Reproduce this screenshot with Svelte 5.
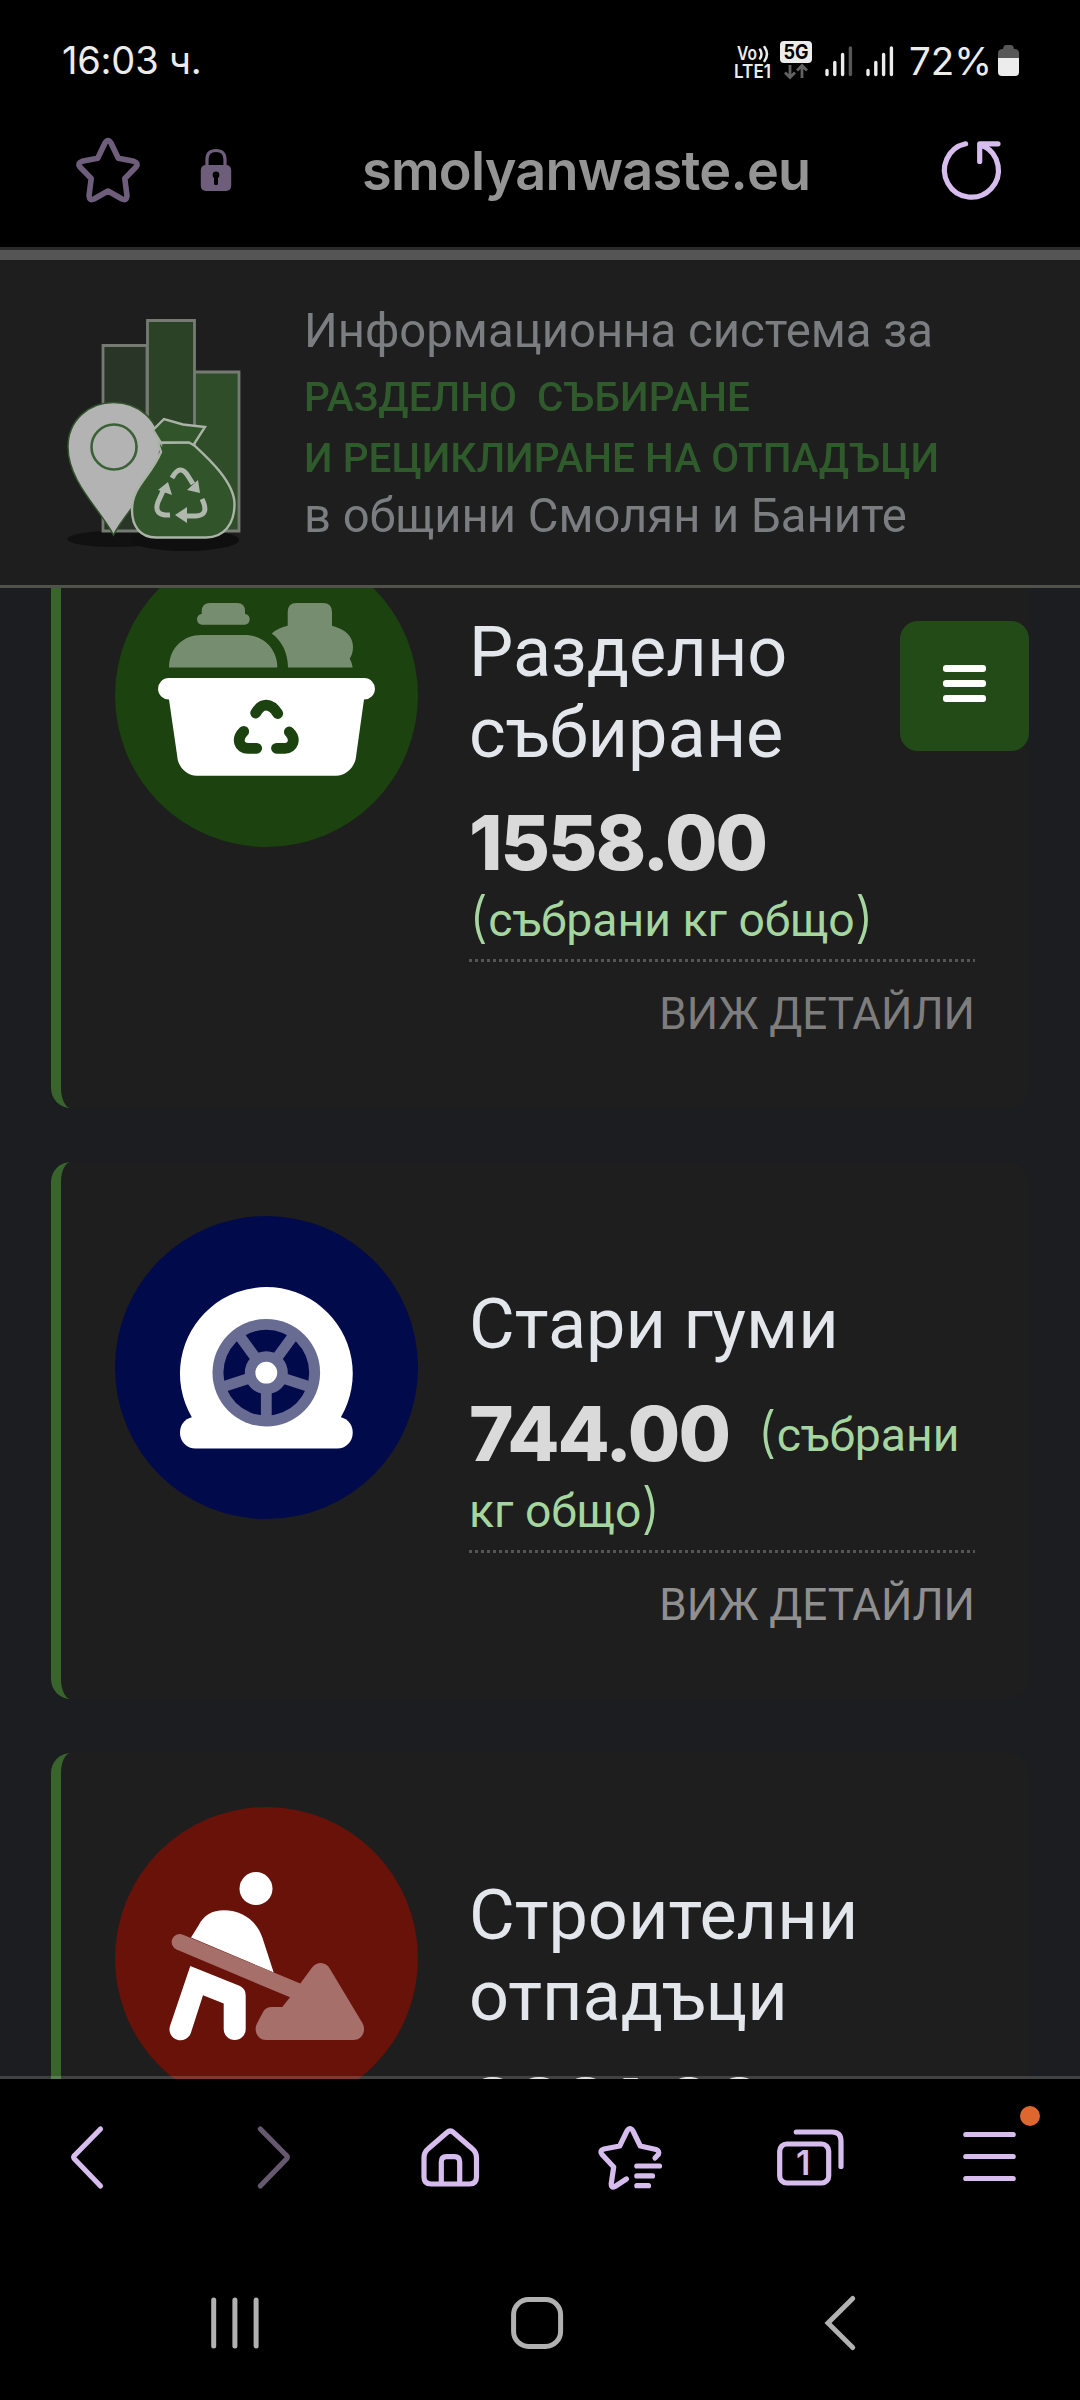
<script lang="ts">
	type Card = {
		title: string[];
		amount: string;
		icon: 'basket' | 'tire' | 'digging';
		color: string;
		visited?: boolean;
	};

	const cards: Card[] = [
		{ title: ['Разделно', 'събиране'], amount: '1558.00', icon: 'basket', color: '#1b420f', visited: true },
		{ title: ['Стари гуми'], amount: '744.00', icon: 'tire', color: '#010a4b' },
		{ title: ['Строителни', 'отпадъци'], amount: '2221.00', icon: 'digging', color: '#68120a' }
	];

	const spokes = [0, 72, 144, 216, 288];
</script>

<div class="screen">
	<div class="status-bar">
		<span class="time">16:03 ч.</span>
		<div class="status-icons">
			<svg class="volte" width="38" height="38" viewBox="0 -2 38 38">
				<text x="3" y="14.500" textLength="20" lengthAdjust="spacingAndGlyphs">Vo</text>
				<path d="M26 4.500Q29 9 26 13.500M30.500 2Q35.500 9 30.500 16" />
				<text x="0" y="32.500" textLength="37" lengthAdjust="spacingAndGlyphs">LTE1</text>
			</svg>
			<svg class="five-g" width="32" height="40" viewBox="0 0 32 40">
				<rect width="32" height="22" rx="4" fill="#ececec" />
				<text x="3.500" y="18" textLength="25" lengthAdjust="spacingAndGlyphs">5G</text>
				<path d="M10 24V36M5 31.500L10 36.500L15 31.500M22 37V25M17 29.500L22 24.500L27 29.500" />
			</svg>
			<svg class="signal" width="28" height="32" viewBox="0 0 28 32">
				<path d="M2 25.500V29.500M9.800 17.500V29.500M17.600 9.500V29.500" />
				<path class="dim" d="M25.400 3V29.500" />
			</svg>
			<svg class="signal" width="28" height="32" viewBox="0 0 28 32">
				<path d="M2 25.500V29.500M9.800 17.500V29.500M17.600 9.500V29.500M25.400 3V29.500" />
			</svg>
			<span class="battery-level">72%</span>
			<svg class="battery" width="21" height="31" viewBox="0 0 21 31">
				<path d="M0 13V8Q0 4 5 4Q5.500 0 8 0H13Q15.500 0 16 4Q21 4 21 8V13Z" fill="#575757" />
				<path d="M0 13H21V27Q21 31 17 31H4Q0 31 0 27Z" fill="#ececec" />
			</svg>
		</div>
	</div>

	<div class="url-bar">
		<svg class="muted-icon" width="80" height="80" viewBox="0 0 80 80">
			<path d="M37 13Q40 8 43 13L50.300 28.300L66 31.300Q71 33 68 37L56.800 48.500L59 66Q58.500 71 54 69L40 61L26 69Q21.500 71 21 66L23.200 48.500L12 37Q9 33 14 31.300L29.700 28.300Z" />
		</svg>
		<svg class="lock" width="32" height="44" viewBox="0 0 32 44">
			<path d="M7 19V11.500Q7 2.500 16 2.500Q25 2.500 25 11.500V19" fill="none" stroke="#6e5e7c" stroke-width="3.200" />
			<rect x="0.800" y="17" width="30.400" height="26" rx="5" fill="#6e5e7c" />
			<circle cx="16" cy="27" r="3.400" />
			<rect x="14" y="28" width="4" height="9" rx="1.500" />
		</svg>
		<span class="url">smolyanwaste.eu</span>
		<svg class="icon reload" width="80" height="80" viewBox="0 0 80 80">
			<path d="M33.600 13.800A27 27 0 1 0 51.500 16M66 13.800H47.700V31.500M48.500 14.500L53 17" />
		</svg>
	</div>

	<header class="banner">
		<svg width="1080" height="325" viewBox="0 260 1080 325">
			<ellipse cx="115" cy="539" rx="48" ry="8" fill="#111" />
			<ellipse cx="185" cy="540" rx="54" ry="11" fill="#0f0f0f" />
			<g stroke="#757b73" stroke-width="2.800">
				<path d="M103 345.500H147V531H103Z" fill="#283527" />
				<path d="M194 372H239V531H194Z" fill="#304d2a" />
				<path d="M147.500 320.500H194.500V531H147.500Z" fill="#2c4227" />
			</g>
			<path d="M113.500 535C101 510 68 482 68 447C68 420 89 402.500 113.500 402.500C138 402.500 160 420 160 447C160 482 126 510 113.500 535Z" fill="#b3b3b3" stroke="#31542b" stroke-width="1.500" />
			<circle cx="114" cy="447" r="22.500" fill="none" stroke="#3a6236" stroke-width="2.600" />
			<g fill="#31542b" stroke="#a9b3a6" stroke-width="2.400">
				<path d="M158 443L161 452C150 478 132 486 132 510C132 526 140 537.500 156 537.500H206C224 537.500 234.500 524 234.500 504C234.500 482 208 458 194 445L189 442Z" />
				<path d="M161 443L153 430L164 419L183 424.500L205 427L193.500 445L189 442.500H161Z" />
			</g>
			<g class="arrows">
				<path d="M172 478Q180 463 188 476L193 484M202 499Q210 515 196 516H184M170 515Q153 516 158 502L163 491" />
				<path class="heads" d="M198 480L200 493L187 490ZM175 515L187 507V523ZM168 482L172 495L158 490Z" />
			</g>
			<g class="plain">
				<text x="304" y="347" font-size="47.300">Информационна система за</text>
				<text x="304" y="532" font-size="47.200">в общини Смолян и Баните</text>
			</g>
			<g class="green">
				<text x="304" y="411" textLength="446">РАЗДЕЛНО&nbsp; СЪБИРАНЕ</text>
				<text x="304" y="471.500" textLength="635">И РЕЦИКЛИРАНЕ НА ОТПАДЪЦИ</text>
			</g>
		</svg>
	</header>

	<main>
		<button class="menu-button" aria-label="Меню">
			<span></span>
			<span></span>
			<span></span>
		</button>

		<div class="cards">
			{#each cards as card (card.icon)}
				<article class="card" class:tall={card.title.length > 1}>
					<svg class="card-icon" width="303" height="303" viewBox="0 0 303 303">
						<circle cx="151.500" cy="151.500" r="151.500" fill={card.color} />
						{#if card.icon === 'basket'}
							<g class="secondary">
								<path d="M86.700 70V67Q87 58.900 95 58.900H122Q130 58.900 130 67V70A5.400 5.400 0 0 1 130 80.700H86.700A5.400 5.400 0 0 1 86.700 70Z" />
								<path d="M54 123.500C54 104 68 91 86.700 91H129.700C148.500 91 162.300 105 162.300 123.500Z" />
								<path d="M172.700 81.700V68Q172.700 58.900 181.500 58.900H208Q217 58.900 217 68V81.700C230 85 238 92 238 103C238 108 236.500 112 234.700 114.600Q237 119 237.700 123.500H173C173 109 166.500 96.500 156.700 89.600Q163 83.500 172.700 81.700Z" />
							</g>
							<path class="primary" d="M53.800 133.900H249.200A10.850 10.850 0 0 1 249 155.600L241 212.800C240 223 231 231.700 221 231.700H81.700C72 231.700 63 223 62.300 212.800L54 155.600A10.850 10.850 0 0 1 53.800 133.900Z" />
							<path
								d="M140.700 169C147 158.500 155.500 158.500 162.700 169.500M128.700 187.400C121 195 124 204.300 133 204.300H141.700M174.300 188C181.500 195 178 204.300 170 204.300H161.500"
								fill="none"
								stroke={card.color}
								stroke-width="10.800"
								stroke-linecap="round"
							/>
						{:else if card.icon === 'tire'}
							<g class="primary">
								<path d="M76.700 201A86.400 86.400 0 1 1 226 201L222 210H81Z" />
								<rect x="65" y="200.700" width="172.700" height="31.800" rx="15.500" />
							</g>
							<circle cx="151.300" cy="156.700" r="53.800" fill="#686c93" />
							<circle cx="151.300" cy="156.700" r="42.900" fill={card.color} />
							<g fill="#686c93">
								{#each spokes as angle}
									<rect x="145.900" y="170" width="10.800" height="31" transform="rotate({angle} 151.300 156.700)" />
								{/each}
								<circle cx="151.300" cy="156.700" r="21.500" />
							</g>
							<circle class="primary" cx="151.300" cy="156.700" r="10.900" />
						{:else}
							<g class="primary">
								<circle cx="141" cy="81.600" r="16.500" />
								<path d="M76 130.600L83.500 118.500C89 108 97 103.300 109 103.300C127 103.300 142 114 147.500 131L158.700 165.600Z" />
								<path d="M75.300 159L125 179Q130.700 182 130.700 188.300V222A11 11 0 0 1 108.700 222V196.600L88 188.300L76 225.600A10.900 10.900 0 0 1 55 219Z" />
							</g>
							<path class="secondary" d="M68 127.700L185.300 176.600L196.700 161C202 154 211 154.500 215 162L247.700 216.600C251.500 224 247 233 238.300 233H151C143 233 138 224 142 216.500L148.300 204.600Q151 200 156.500 200H167.300L175 190.300L61.500 142.500A7.900 7.900 0 0 1 68 127.700Z" />
						{/if}
					</svg>
					<div class="card-body">
						<h2>
							{#each card.title as line}
								<span>{line}</span>
							{/each}
						</h2>
						<p>
							<strong>{card.amount}</strong>
							<span class="unit"><span class="nowrap"><i>(</i>събрани</span> кг <span class="nowrap">общо<i>)</i></span></span>
						</p>
						<a href="#details" class:visited={card.visited}>ВИЖ ДЕТАЙЛИ</a>
					</div>
				</article>
			{/each}
		</div>
	</main>

	<nav class="toolbar">
		<svg class="icon" width="80" height="80" viewBox="50 2117 80 80">
			<path d="M100.500 2129L74.500 2155.500Q73 2157.300 74.500 2159L100.500 2186" />
		</svg>
		<svg class="icon disabled" width="80" height="80" viewBox="230 2117 80 80">
			<path d="M260.300 2129L286.500 2155.500Q288 2157.300 286.500 2159L260.300 2186" />
		</svg>
		<svg class="icon" width="80" height="80" viewBox="410 2117 80 80">
			<path d="M447 2132.500Q450.300 2129.500 453.500 2132.500L472 2148.500Q476.500 2152 476.500 2158V2177Q476.500 2184 469.500 2184H431Q424 2184 424 2177V2158Q424 2152 428.500 2148.500Z" />
			<path d="M441.300 2183V2162Q441.300 2156.700 446.500 2156.700H454.500Q459.700 2156.700 459.700 2162V2183" />
		</svg>
		<svg class="icon" width="80" height="80" viewBox="0 0 80 80">
			<path d="M65 41L68.300 37.500Q70 34 66 32.500L50.300 29L43 14Q40 9 37 14L29.700 29L14 32Q9 33.500 12 37.500L23.700 50L21.200 67Q21 71.500 25 69.500L36.400 62" />
			<path d="M46.800 49H69.500M46.800 58.900H62.500M46.800 68.700H58.500" />
		</svg>
		<svg class="icon" width="80" height="80" viewBox="770 2117 80 80">
			<rect x="779.700" y="2144" width="49" height="39" rx="7" />
			<path d="M796.300 2132H832Q841 2132 841 2141V2166.500" />
			<text x="796" y="2175">1</text>
		</svg>
		<div class="menu">
			<svg class="icon" width="80" height="80" viewBox="950 2117 80 80">
				<path d="M965.800 2134.500H1013.200M965.800 2156.500H1013.200M965.800 2178.500H1013.200" />
			</svg>
			<span class="badge"></span>
		</div>
	</nav>

	<div class="system-nav">
		<svg width="80" height="80" viewBox="198 2283 80 80">
			<path d="M213.700 2300V2346M234.900 2300V2346M256.100 2300V2346" />
		</svg>
		<svg width="80" height="80" viewBox="500 2283 80 80">
			<rect x="513.600" y="2299.500" width="47" height="47" rx="15" />
		</svg>
		<svg width="80" height="80" viewBox="802 2283 80 80">
			<path d="M852.700 2298.500L828 2323L852.700 2347.500" />
		</svg>
	</div>
</div>

<style>
	:global(body) {
		margin: 0;
		background: #000;
	}

	.screen {
		width: 1080px;
		height: 2400px;
		display: flex;
		flex-direction: column;
		overflow: hidden;
		background: #000;
		font-family: Roboto, 'Noto Sans', sans-serif;
	}

	svg {
		display: block;
		flex: none;
	}

	.status-bar {
		height: 120px;
		padding: 0 61px 0 62px;
		display: flex;
		align-items: center;
		justify-content: space-between;
		box-sizing: border-box;
		color: #ececec;
		font-family: Inter, sans-serif;
	}

	.time {
		font-size: 38px;
		letter-spacing: -0.2px;
	}

	.status-icons {
		display: flex;
		align-items: center;
	}

	.volte {
		fill: #ececec;
		font: 600 19px Inter, sans-serif;
		margin-right: 8px;
		margin-top: 3px;
	}

	.volte path {
		fill: none;
		stroke: #ececec;
		stroke-width: 2.500;
		stroke-linecap: round;
	}

	.five-g {
		font: 700 20px Inter, sans-serif;
		margin-top: 2px;
		margin-right: 13px;
	}

	.five-g path {
		fill: none;
		stroke: #616161;
		stroke-width: 2.800;
	}

	.signal {
		margin-right: 13px;
		margin-top: 2px;
		fill: none;
		stroke: #ececec;
		stroke-width: 3.400;
		stroke-linecap: round;
	}

	.signal .dim {
		stroke: #575757;
	}

	.battery-level {
		font-size: 38.500px;
		margin-top: 1px;
		margin-left: 2px;
	}

	.battery {
		margin-left: 6px;
		margin-top: 1px;
	}

	.url-bar {
		height: 127px;
		padding: 0 68px 27px;
		display: flex;
		align-items: center;
		box-sizing: border-box;
	}

	.muted-icon {
		fill: none;
		stroke: #6e5e7c;
		stroke-width: 5.600;
		stroke-linejoin: round;
	}

	.lock {
		margin-left: 52px;
	}

	.url {
		margin-left: 130px;
		font: 600 54px Inter, sans-serif;
		letter-spacing: -0.75px;
		color: #949494;
	}

	.reload {
		margin-left: auto;
	}

	.icon {
		fill: none;
		stroke: #d6bdee;
		stroke-width: 5.200;
		stroke-linecap: round;
		stroke-linejoin: round;
	}

	.icon.disabled {
		stroke: #65586f;
	}

	.icon text {
		fill: #d6bdee;
		stroke: none;
		font: 600 34px Inter, sans-serif;
	}

	.banner {
		height: 341px;
		box-sizing: border-box;
		border-top: 3px solid #2b2b2b;
		border-bottom: 3px solid #52524c;
		box-shadow: inset 0 10px #555;
		padding-top: 10px;
		background-color: #1e1e1e;
	}

	.banner svg {
		filter: blur(0.7px);
	}

	.arrows {
		fill: none;
		stroke: #b0b8ae;
		stroke-width: 5;
	}

	.arrows .heads {
		fill: #b0b8ae;
		stroke: none;
	}

	.plain {
		fill: #7b7d80;
	}

	.green {
		fill: #2f5a2b;
		font-size: 40.500px;
		font-weight: 500;
	}

	main {
		position: relative;
		height: 1491px;
		overflow: hidden;
		background-color: #1b1d20;
	}

	.menu-button {
		position: absolute;
		top: 33px;
		right: 51px;
		width: 129px;
		height: 130px;
		padding: 0 0 5px;
		border: none;
		border-radius: 18px;
		background-color: #234b18;
		display: flex;
		flex-direction: column;
		align-items: center;
		justify-content: center;
		gap: 8px;
	}

	.menu-button span {
		width: 43px;
		height: 7px;
		border-radius: 3px;
		background-color: #fff;
	}

	.cards {
		margin-top: -98px;
		padding: 0 51px;
		display: flex;
		flex-direction: column;
		gap: 54px;
	}

	.card {
		display: flex;
		align-items: flex-start;
		gap: 51px;
		padding: 54px;
		height: 537px;
		box-sizing: border-box;
		border-left: 10px solid #39652d;
		border-radius: 20px;
		background-color: #1e1e1e;
	}

	.card.tall {
		height: 618px;
	}

	.primary {
		fill: #fff;
	}

	.secondary {
		fill: #fff;
		opacity: 0.4;
	}

	/* keeps the handle opaque over the body */
	path.secondary {
		fill: #a66f6a;
		opacity: 1;
	}

	.card-body {
		flex: 1;
		padding-top: 68px;
		display: flex;
		flex-direction: column;
	}

	h2 {
		margin: 0;
		font-size: 70.200px;
		font-weight: 400;
		line-height: 81px;
		color: #e3e6eb;
	}

	h2 span {
		display: block;
	}

	p {
		margin: 43px 0 -9px;
		font-size: 46.300px;
		line-height: 75.500px;
		color: #a6d6a0;
	}

	strong {
		margin-right: 17px;
		font: 800 76px Inter, sans-serif;
		line-height: 0;
		letter-spacing: -2px;
		color: #dadada;
	}

	.unit {
		vertical-align: 10px;
		line-height: 0;
	}

	.nowrap {
		white-space: nowrap;
	}

	.unit i {
		font: 300 55px Inter, sans-serif;
		line-height: 0;
	}

	a {
		padding-top: 23px;
		background: repeating-linear-gradient(90deg, #555 0 3px, transparent 3px 6px) top / 100% 3px no-repeat;
		color: #8f8f8f;
		font-size: 44px;
		line-height: 65px;
		text-align: right;
		text-decoration: none;
	}

	a.visited {
		color: #7d7d7d;
	}

	.toolbar {
		position: relative;
		height: 159px;
		margin-top: -3px;
		box-sizing: border-box;
		border-top: 3px solid rgba(255, 255, 255, 0.16);
		background: #000 padding-box;
		display: grid;
		grid-template-columns: repeat(6, 180px);
		align-items: center;
		justify-items: center;
	}

	.menu {
		position: relative;
	}

	.badge {
		position: absolute;
		top: -11px;
		right: -10px;
		width: 20px;
		height: 20px;
		border-radius: 50%;
		background-color: #de6730;
	}

	.system-nav {
		height: 165px;
		padding-top: 11px;
		box-sizing: border-box;
		display: flex;
		align-items: center;
		justify-content: center;
		gap: 222px;
		fill: none;
		stroke: #b1b1b1;
		stroke-width: 5;
		stroke-linecap: round;
	}
</style>
